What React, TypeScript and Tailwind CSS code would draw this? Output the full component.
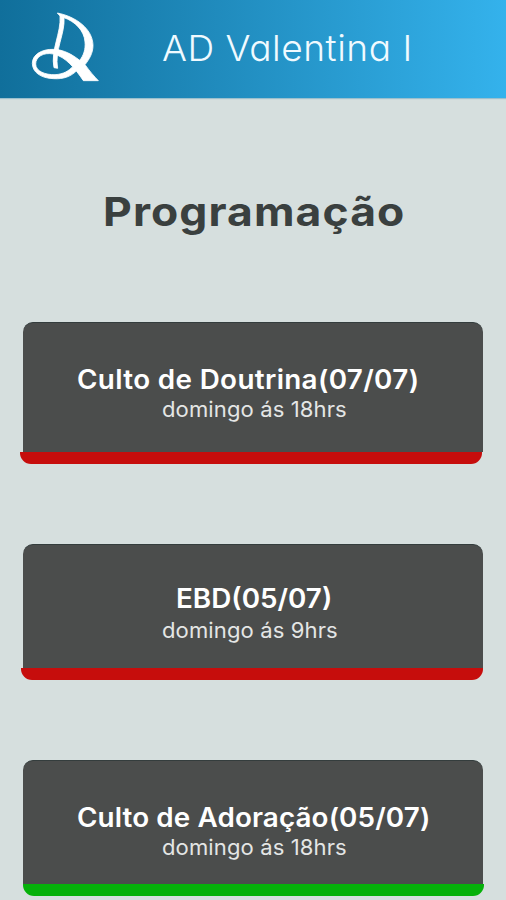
import React from 'react';
import clsx from 'clsx';

interface Event {
    title: string;
    time: string;
    titleClass: string;
    timeClass: string;
    cardClass: string;
    bodyClass: string;
    barClass: string;
}

const events: Event[] = [
    {
        title: 'Culto de Doutrina(07/07)',
        time: 'domingo ás 18hrs',
        titleClass: 'ml-[54px] scale-x-105 tracking-[0.33px]',
        timeClass: 'mt-px tracking-[0.1px]',
        cardClass: 'h-[142px]',
        bodyClass: 'h-[130px] pt-[40px]',
        barClass: 'bg-[#c60d0c] ml-[-3px] w-[462px]',
    },
    {
        title: 'EBD(05/07)',
        time: 'domingo ás 9hrs',
        titleClass: 'ml-[153px] scale-x-105',
        timeClass: 'mt-[3px] tracking-[0.1px]',
        cardClass: 'mt-[80px] h-[136px]',
        bodyClass: 'h-[124px] pt-[37px]',
        barClass: 'bg-[#c60d0c] ml-[-2px] w-[462px]',
    },
    {
        title: 'Culto de Adoração(05/07)',
        time: 'domingo ás 18hrs',
        titleClass: 'ml-[54px] scale-x-105 tracking-[0.1px]',
        timeClass: 'mt-px tracking-[0.1px]',
        cardClass: 'mt-[80px] h-[136px]',
        bodyClass: 'h-[124px] pt-[40px]',
        barClass: 'bg-[#06b10a] ml-0 w-[461px]',
    },
];

const Logo: React.FC = () => (
    <svg viewBox="0 0 300 294" className="h-[98px] w-[100px] shrink-0" fill="#fff" stroke="#fff" strokeWidth="2.5">
        <path d="M112 39C165 49 218 85 219 136C219 160 207 179 195 194C208 212 222 229 235 242L190 242C165 205 137 170 100 162C70 156 47 171 47 192C47 214 77 225 105 224C131 223 148 211 157 201L171 211C154 229 131 238 101 236C62 235 37 216 37 190C37 164 65 147 101 148C132 149 157 164 179 181C191 166 197 148 195 126C193 91 164 64 132 53C136 100 103 151 113 205L102 203C91 151 124 99 120 48Z" />
    </svg>
);

const App: React.FC = () => {
    return (
        <div className="h-[900px] w-[506px] overflow-hidden bg-[#d6dfde] font-['Inter',sans-serif]">
            <header className="flex h-[98px] bg-linear-to-r from-[#106f9b] to-[#34b2ec] pl-5 shadow-[0_1px_1px_#9bc0ce]">
                <Logo />
                <h1 className="mt-[27px] ml-[42px] origin-left scale-x-103 text-[36px] leading-[42px] font-light tracking-[0.5px] whitespace-nowrap text-[#f0faff] [font-feature-settings:'cv11']">
                    AD Valentina I
                </h1>
            </header>

            <main className="px-[23px]">
                <h2 className="mt-[89px] ml-[80px] origin-left scale-x-111 text-[40px] leading-[50px] font-bold tracking-[1px] whitespace-nowrap text-[#3a403f]">
                    Programação
                </h2>

                <div className="mt-[85px]">
                    {events.map((event) => (
                        <div key={event.title} className={clsx('w-[460px]', event.cardClass)}>
                            <div className={clsx('rounded-t-[10px] border-t border-[#343d3d] bg-[#4b4d4c] whitespace-nowrap', event.bodyClass)}>
                                <h3 className={clsx('origin-left text-[26.5px] leading-[32px] font-semibold text-white', event.titleClass)}>
                                    {event.title}
                                </h3>
                                <p className={clsx('ml-[139px] origin-left scale-x-105 text-[21px] leading-[28px] font-[370] text-[#e4e6e5]', event.timeClass)}>
                                    {event.time}
                                </p>
                            </div>
                            <div className={clsx('h-[12px] rounded-b-[11px]', event.barClass)} />
                        </div>
                    ))}
                </div>
            </main>
        </div>
    );
};

export default App;
